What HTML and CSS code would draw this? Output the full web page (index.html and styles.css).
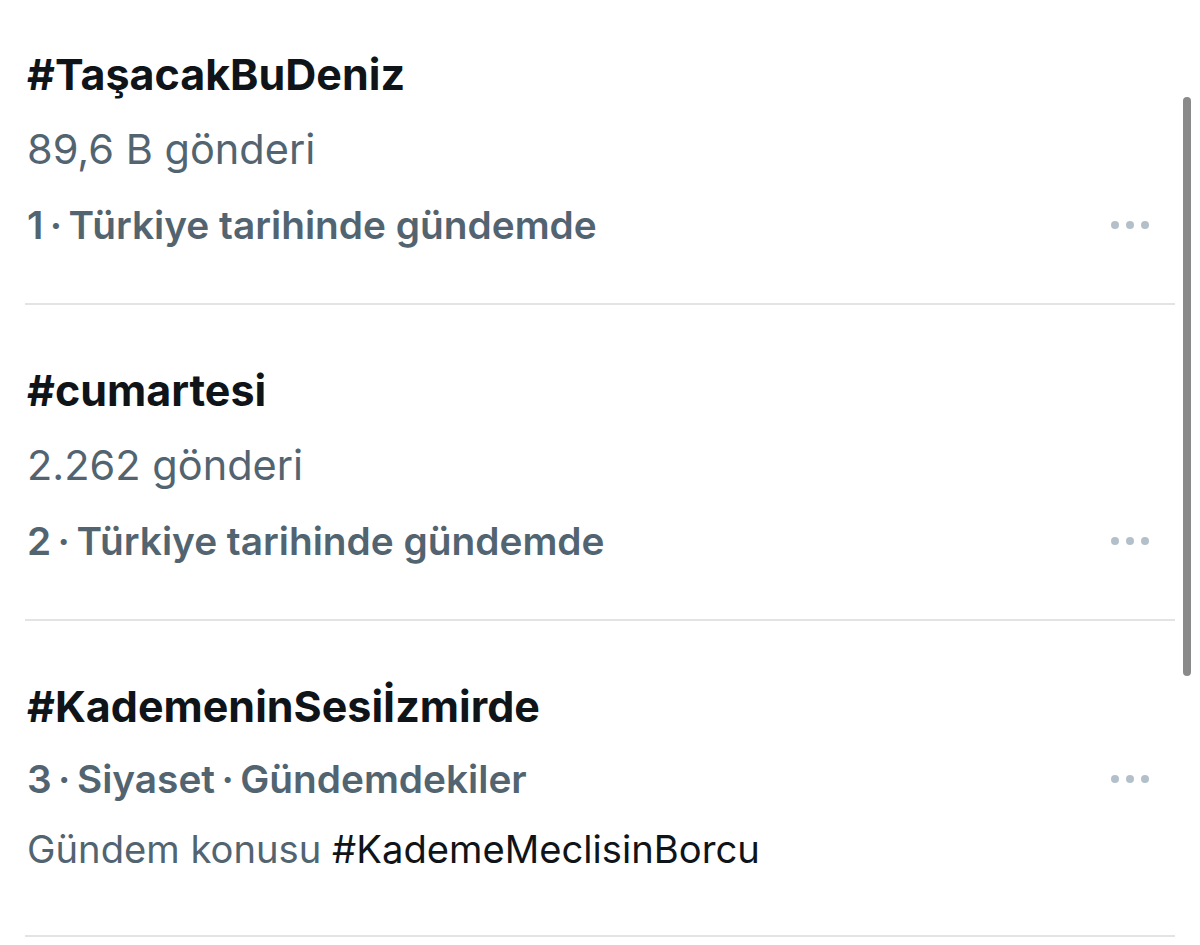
FILE: index.html
```html
<!DOCTYPE html>
<html lang="tr">
<head>
    <meta charset="UTF-8">
    <meta name="viewport" content="width=device-width, initial-scale=1.0">
    <title>Gündemdekiler</title>
    <link rel="stylesheet" href="styles.css">
</head>
<body>
    <div class="trends">
        <div class="trend">
            <div class="trend-title">#TaşacakBuDeniz</div>
            <div class="trend-count">89,6 B gönderi</div>
            <div class="trend-meta">
                <span>1&thinsp;·&thinsp;Türkiye tarihinde gündemde</span>
                <span class="more"><i></i><i></i><i></i></span>
            </div>
        </div>

        <div class="trend">
            <div class="trend-title">#cumartesi</div>
            <div class="trend-count">2.262 gönderi</div>
            <div class="trend-meta">
                <span>2&thinsp;·&thinsp;Türkiye tarihinde gündemde</span>
                <span class="more"><i></i><i></i><i></i></span>
            </div>
        </div>

        <div class="trend trend-compact">
            <div class="trend-title">#KademeninSesiİzmirde</div>
            <div class="trend-meta">
                <span>3&thinsp;·&thinsp;Siyaset&thinsp;·&thinsp;Gündemdekiler</span>
                <span class="more"><i></i><i></i><i></i></span>
            </div>
            <div class="trend-context">Gündem konusu <span class="tag">#KademeMeclisinBorcu</span></div>
        </div>
    </div>

    <div class="scrollbar"></div>
</body>
</html>
```

FILE: styles.css
```css
:root {
    --text-color: #0f1419;
    --muted-color: #536471;
    --border-color: #e1e3e5;
    --dot-color: #b3c0ca;
}

* {
    box-sizing: border-box;
    margin: 0;
    padding: 0;
}

body {
    background: #fff;
    color: var(--text-color);
    font-family: Inter, "Noto Sans", sans-serif;
    overflow: hidden;
}

.trends {
    margin: 0 25px;
}

.trend {
    padding: 47px 0 41px 2px;
    border-bottom: 2px solid var(--border-color);
}

.trend:first-child {
    padding-top: 36px;
}

.trend-title {
    font-size: 43px;
    font-weight: 700;
    line-height: 76px;
}

.trend-count {
    font-size: 41.5px;
    font-weight: 400;
    line-height: 75px;
    color: var(--muted-color);
}

.trend-meta {
    display: flex;
    justify-content: space-between;
    align-items: center;
    font-size: 38.8px;
    font-weight: 600;
    line-height: 75px;
    color: var(--muted-color);
}

.trend-compact .trend-meta {
    line-height: 70px;
}

.trend-context {
    font-size: 38.2px;
    line-height: 70px;
    color: var(--muted-color);
    padding-bottom: 10px;
}

.trend-context .tag {
    color: var(--text-color);
}

.more {
    display: flex;
    gap: 7px;
    margin-right: 26px;
}

.more i {
    width: 8px;
    height: 8px;
    border-radius: 50%;
    background: var(--dot-color);
}

.scrollbar {
    position: absolute;
    left: 1183px;
    top: 97px;
    width: 8px;
    height: 579px;
    border-radius: 4px;
    background: #8a8a8a;
}
```
